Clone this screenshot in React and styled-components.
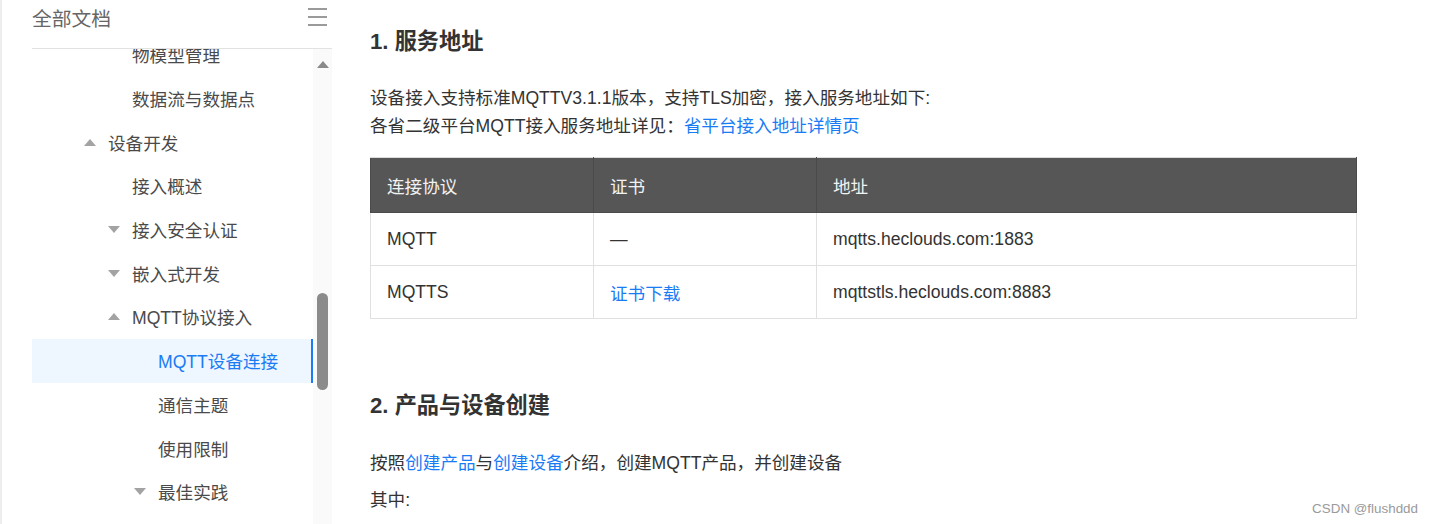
import React from 'react';
import styled, { createGlobalStyle } from 'styled-components';

const GlobalStyle = createGlobalStyle`
  html, body {
    margin: 0;
    padding: 0;
    background: #fff;
    font-family: "Liberation Sans", "Noto Sans CJK SC", sans-serif;
  }
`;

const LINK = '#1a7cf5';

const Page = styled.div`
  display: flex;
  height: 524px;
  overflow: hidden;
  position: relative;
`;

// sidebar
const Sidebar = styled.aside`
  width: 332px;
  flex-shrink: 0;
  box-sizing: border-box;
  border-left: 2px solid #ededed;
  padding-left: 30px;
  display: flex;
  flex-direction: column;
`;

const SideHeader = styled.div`
  display: flex;
  justify-content: space-between;
  align-items: center;
  height: 34px;
  padding: 0 5px 14px 0;
  border-bottom: 1px solid #e2e2e2;
`;

const SideTitle = styled.span`
  font-size: 19.8px;
  color: #666;
`;

const Burger = styled.div`
  width: 19px;
  display: flex;
  flex-direction: column;
  gap: 6px;
  span {
    display: block;
    height: 2px;
    background: #9a9a9a;
  }
`;

const SideBody = styled.div`
  flex: 1;
  display: flex;
  overflow: hidden;
`;

const NavList = styled.ul`
  flex: 1;
  list-style: none;
  margin: -16px 0 0;
  padding: 0;
`;

const NavItem = styled.li`
  height: 43.7px;
  box-sizing: border-box;
  display: flex;
  align-items: center;
  padding-left: ${(p) => p.$indent}px;
  font-size: 17.6px;
  color: ${(p) => (p.$active ? LINK : '#4a4a4a')};
  background: ${(p) => (p.$active ? '#eef6ff' : 'transparent')};
  border-right: 2px solid ${(p) => (p.$active ? LINK : 'transparent')};
`;

const ArrowSlot = styled.span`
  width: 24px;
  flex-shrink: 0;
  display: flex;
  align-items: center;
`;

const Triangle = styled.span`
  width: 0;
  height: 0;
  border-left: 6px solid transparent;
  border-right: 6px solid transparent;
  ${(p) =>
    p.$up
      ? 'border-bottom: 7px solid #a3a3a3;'
      : 'border-top: 7px solid #a3a3a3;'}
`;

const Track = styled.div`
  width: 19px;
  flex-shrink: 0;
  background: #fafafa;
  display: flex;
  flex-direction: column;
  align-items: center;
`;

const TrackArrow = styled.span`
  margin-top: 12px;
  width: 0;
  height: 0;
  border-left: 6.5px solid transparent;
  border-right: 6.5px solid transparent;
  border-bottom: 7px solid #8a8a8a;
`;

const Thumb = styled.div`
  margin-top: 225px;
  width: 11px;
  height: 97px;
  border-radius: 6px;
  background: #8b8b8b;
`;

// content
const Content = styled.main`
  flex: 1;
  padding: 27px 0 0 38px;
  color: #333;
`;

const Heading = styled.h2`
  margin: ${(p) => p.$top || 0}px 0 0;
  font-size: 22.2px;
  line-height: 30px;
  font-weight: bold;
  color: #333;
`;

const Para = styled.p`
  margin: ${(p) => p.$top || 0}px 0 0;
  font-size: 17.6px;
  line-height: 28px;
  color: #333;
`;

const Link = styled.a`
  color: ${LINK};
  text-decoration: none;
`;

const Table = styled.table`
  margin-top: 17px;
  width: 987px;
  border-collapse: collapse;
  font-size: 17.6px;
`;

const Th = styled.th`
  height: 55px;
  box-sizing: border-box;
  padding: 0 16px;
  text-align: left;
  font-weight: normal;
  background: #565656;
  color: #f2f2f2;
  border: 1px solid #4a4a4a;
  border-top-color: #dcdcdc;
  width: ${(p) => p.$w || 'auto'};
`;

const Td = styled.td`
  height: 53px;
  box-sizing: border-box;
  padding: 0 16px;
  color: #333;
  border: 1px solid #e0e0e0;
`;

const Watermark = styled.div`
  position: absolute;
  right: 15px;
  bottom: 8px;
  font-size: 13.4px;
  color: #9a9a9a;
`;

const navItems = [
  { text: '物模型管理', x: 132 },
  { text: '数据流与数据点', x: 132 },
  { text: '设备开发', x: 108, arrow: 'up' },
  { text: '接入概述', x: 132 },
  { text: '接入安全认证', x: 132, arrow: 'down' },
  { text: '嵌入式开发', x: 132, arrow: 'down' },
  { text: 'MQTT协议接入', x: 132, arrow: 'up' },
  { text: 'MQTT设备连接', x: 158, active: true },
  { text: '通信主题', x: 158 },
  { text: '使用限制', x: 158 },
  { text: '最佳实践', x: 158, arrow: 'down' },
];

export default function App() {
  return (
    <>
      <GlobalStyle />
      <Page>
        <Sidebar>
          <SideHeader>
            <SideTitle>全部文档</SideTitle>
            <Burger>
              <span />
              <span />
              <span />
            </Burger>
          </SideHeader>
          <SideBody>
            <NavList>
              {navItems.map((item) => (
                <NavItem key={item.text} $indent={item.x - 32 - 24} $active={item.active}>
                  <ArrowSlot>{item.arrow && <Triangle $up={item.arrow === 'up'} />}</ArrowSlot>
                  {item.text}
                </NavItem>
              ))}
            </NavList>
            <Track>
              <TrackArrow />
              <Thumb />
            </Track>
          </SideBody>
        </Sidebar>

        <Content>
          <Heading>1. 服务地址</Heading>
          <Para $top={27}>
            设备接入支持标准MQTTV3.1.1版本，支持TLS加密，接入服务地址如下:
            <br />
            各省二级平台MQTT接入服务地址详见：<Link href="#">省平台接入地址详情页</Link>
          </Para>
          <Table>
            <thead>
              <tr>
                <Th $w="223px">连接协议</Th>
                <Th $w="223px">证书</Th>
                <Th>地址</Th>
              </tr>
            </thead>
            <tbody>
              <tr>
                <Td>MQTT</Td>
                <Td>—</Td>
                <Td>mqtts.heclouds.com:1883</Td>
              </tr>
              <tr>
                <Td>MQTTS</Td>
                <Td>
                  <Link href="#">证书下载</Link>
                </Td>
                <Td>mqttstls.heclouds.com:8883</Td>
              </tr>
            </tbody>
          </Table>
          <Heading $top={72}>2. 产品与设备创建</Heading>
          <Para $top={28}>
            按照<Link href="#">创建产品</Link>与<Link href="#">创建设备</Link>介绍，创建MQTT产品，并创建设备
          </Para>
          <Para $top={9}>其中:</Para>
        </Content>
        <Watermark>CSDN @flushddd</Watermark>
      </Page>
    </>
  );
}
